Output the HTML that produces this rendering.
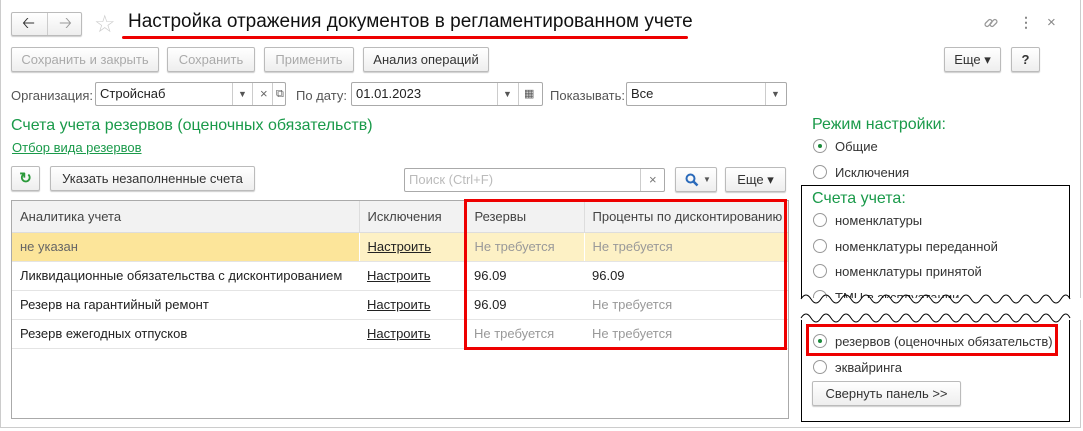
<!DOCTYPE html>
<html><head><meta charset="utf-8"><style>
*{box-sizing:border-box;margin:0;padding:0}
body{width:1083px;height:431px;background:#fff;font-family:"Liberation Sans",Arial,sans-serif;font-size:13px;color:#333;position:relative;overflow:hidden}
.a{position:absolute}
.btn{position:absolute;height:25px;border:1px solid #bbb;border-radius:2px;background:linear-gradient(#fff,#eee);box-shadow:0 1px 1px #ccc;text-align:center;line-height:23px;color:#333;font-size:13px}
.dis{color:#aaa}
.fld{position:absolute;height:24px;border:1px solid #aaa;border-radius:2px;background:#fff;line-height:22px;padding-left:4px;color:#222}
.sep{position:absolute;top:0;bottom:0;border-left:1px solid #ccc}
.lbl{position:absolute;color:#555;font-size:13px}
.rad{position:absolute;width:14px;height:14px;border:1px solid #999;border-radius:50%;background:#fff}
.rad.on::after{content:"";position:absolute;left:4px;top:4px;width:4px;height:4px;border-radius:50%;background:#1a8a3a}
.rt{position:absolute;font-size:13px;color:#333}
table{border-collapse:collapse}
td{height:29px;border-bottom:1px solid #e4e4e4;padding-left:8px;font-size:13px;color:#222;white-space:nowrap}
th{height:31px;background:#f2f2f2;font-weight:normal;text-align:left;padding-left:8px;color:#444;border-right:1px solid #ddd;border-bottom:1px solid #ddd}
.g{color:#999}
.u{text-decoration:underline;color:#222}
</style></head><body>
<div class="a" style="left:0;top:0;width:1081px;height:428px;border:1px solid #ccc;border-top:none"></div>
<div class="btn" style="left:11px;top:12px;width:71px;height:24px;line-height:22px;font-size:16px;text-align:left"><span style="position:absolute;left:10px;color:#333">&#129120;</span><span style="position:absolute;left:35px;top:0;bottom:0;border-left:1px solid #ccc"></span><span style="position:absolute;left:47px;color:#999">&#129122;</span></div>
<div class="a" style="left:94px;top:10px;font-size:24px;color:#ccc">☆</div>
<div class="a" style="left:128px;top:11px;font-size:19px;color:#111">Настройка отражения документов в регламентированном учете</div>
<div class="a" style="left:122px;top:36px;width:566px;height:3px;background:#e00;border-radius:2px"></div>
<svg class="a" style="left:983px;top:15px" width="16" height="16"><g fill="none" stroke="#999" stroke-width="1.3"><rect x="1.5" y="6" width="8" height="4" rx="2" transform="rotate(-45 5.5 8)"/><rect x="6.5" y="6" width="8" height="4" rx="2" transform="rotate(-45 10.5 8)"/></g></svg>
<div class="a" style="left:1019px;top:14px;font-size:14px;color:#888;font-weight:bold">⋮</div>
<div class="a" style="left:1047px;top:14px;font-size:15px;color:#888">×</div>
<div class="btn dis" style="left:11px;top:47px;width:148px">Сохранить и закрыть</div>
<div class="btn dis" style="left:167px;top:47px;width:88px">Сохранить</div>
<div class="btn dis" style="left:264px;top:47px;width:90px">Применить</div>
<div class="btn" style="left:363px;top:47px;width:126px">Анализ операций</div>
<div class="btn" style="left:944px;top:47px;width:57px">Еще ▾</div>
<div class="btn" style="left:1011px;top:47px;width:29px;font-weight:bold">?</div>
<div class="lbl" style="left:11px;top:88px">Организация:</div>
<div class="fld" style="left:95px;top:82px;width:191px">Стройснаб<span class="sep" style="left:136px"></span><span class="a" style="left:142px;top:0;font-size:9px;color:#555">▼</span><span class="sep" style="left:156px"></span><span class="a" style="left:164px;color:#666">×</span><span class="sep" style="left:176px"></span><span class="a" style="left:180px;font-size:11px;color:#555">⧉</span></div>
<div class="lbl" style="left:296px;top:88px">По дату:</div>
<div class="fld" style="left:351px;top:82px;width:192px">01.01.2023<span class="sep" style="left:145px"></span><span class="a" style="left:151px;top:0;font-size:9px;color:#555">▼</span><span class="sep" style="left:166px"></span><span class="a" style="left:172px;font-size:11px;color:#555">▦</span></div>
<div class="lbl" style="left:550px;top:88px">Показывать:</div>
<div class="fld" style="left:626px;top:82px;width:161px">Все<span class="sep" style="left:138px"></span><span class="a" style="left:144px;top:0;font-size:9px;color:#555">▼</span></div>
<div class="a" style="left:11px;top:117px;font-size:16px;color:#1a9a4a">Счета учета резервов (оценочных обязательств)</div>
<div class="a" style="left:12px;top:140px;font-size:13px;color:#1a9a4a;text-decoration:underline">Отбор вида резервов</div>
<div class="btn" style="left:11px;top:166px;width:29px;color:#2a9a3a;font-weight:bold;font-size:15px">↻</div>
<div class="btn" style="left:50px;top:166px;width:205px">Указать незаполненные счета</div>
<div class="fld" style="left:404px;top:168px;width:261px;color:#bbb">Поиск (Ctrl+F)<span class="sep" style="left:235px"></span><span class="a" style="left:244px;color:#777">×</span></div>
<div class="btn" style="left:675px;top:167px;width:42px"><svg class="a" style="left:9px;top:5px" width="14" height="14"><circle cx="5.5" cy="5.5" r="4" fill="none" stroke="#2a6aba" stroke-width="2"/><path d="M8.5 8.5 L12.5 12.5" stroke="#2a6aba" stroke-width="2.5"/></svg><span class="a" style="left:27px;color:#555;font-size:8px">▼</span></div>
<div class="btn" style="left:725px;top:167px;width:61px">Еще ▾</div>
<div class="a" style="left:11px;top:200px;width:778px;height:219px;border:1px solid #aaa">
<table style="width:776px">
<tr><th style="width:347px">Аналитика учета</th><th style="width:107px">Исключения</th><th style="width:118px">Резервы</th><th style="border-right:none">Проценты по дисконтированию</th></tr>
<tr style="background:#fdf1c5"><td class="g" style="background:#fce59a;color:#666;border-right:1px solid #fff">не указан</td><td style="border-right:1px solid #fff"><span class="u">Настроить</span></td><td class="g" style="border-right:1px solid #fff">Не требуется</td><td class="g">Не требуется</td></tr>
<tr><td>Ликвидационные обязательства с дисконтированием</td><td><span class="u">Настроить</span></td><td>96.09</td><td>96.09</td></tr>
<tr><td>Резерв на гарантийный ремонт</td><td><span class="u">Настроить</span></td><td>96.09</td><td class="g">Не требуется</td></tr>
<tr><td>Резерв ежегодных отпусков</td><td><span class="u">Настроить</span></td><td class="g">Не требуется</td><td class="g">Не требуется</td></tr>
</table></div>
<div class="a" style="left:464px;top:199px;width:323px;height:151px;border:3px solid #e00"></div>
<div class="a" style="left:812px;top:116px;font-size:16px;color:#1a9a4a">Режим настройки:</div>
<div class="rad on" style="left:813px;top:139px"></div><div class="rt" style="left:835px;top:139px">Общие</div>
<div class="rad" style="left:813px;top:165px"></div><div class="rt" style="left:835px;top:165px">Исключения</div>
<div class="a" style="left:801px;top:185px;width:269px;height:237px;border:1px solid #000"></div>
<div class="a" style="left:812px;top:190px;font-size:16px;color:#1a9a4a">Счета учета:</div>
<div class="rad" style="left:813px;top:213px"></div><div class="rt" style="left:835px;top:213px">номенклатуры</div>
<div class="rad" style="left:813px;top:239px"></div><div class="rt" style="left:835px;top:239px">номенклатуры переданной</div>
<div class="rad" style="left:813px;top:264px"></div><div class="rt" style="left:835px;top:264px">номенклатуры принятой</div>
<div class="rad" style="left:813px;top:290px"></div><div class="rt" style="left:835px;top:290px">ТМЦ в эксплуатации</div>
<svg class="a" style="left:798px;top:294px" width="285" height="30">
<path d="M0 4 H285 V26 H0Z" fill="#fff"/>
<path d="M3 5 q5 -8 10 0 t10 0 t10 0 t10 0 t10 0 t10 0 t10 0 t10 0 t10 0 t10 0 t10 0 t10 0 t10 0 t10 0 t10 0 t10 0 t10 0 t10 0 t10 0 t10 0 t10 0 t10 0 t10 0 t10 0 t10 0 t10 0 t9 0" fill="none" stroke="#000"/>
<path d="M3 24 q5 -8 10 0 t10 0 t10 0 t10 0 t10 0 t10 0 t10 0 t10 0 t10 0 t10 0 t10 0 t10 0 t10 0 t10 0 t10 0 t10 0 t10 0 t10 0 t10 0 t10 0 t10 0 t10 0 t10 0 t10 0 t10 0 t10 0 t9 0" fill="none" stroke="#000"/>
</svg>
<div class="rad on" style="left:813px;top:334px"></div><div class="rt" style="left:835px;top:334px">резервов (оценочных обязательств)</div>
<div class="a" style="left:806px;top:324px;width:252px;height:32px;border:3px solid #e00"></div>
<div class="rad" style="left:813px;top:360px"></div><div class="rt" style="left:835px;top:360px">эквайринга</div>
<div class="btn" style="left:812px;top:381px;width:149px">Свернуть панель &gt;&gt;</div>
</body></html>
